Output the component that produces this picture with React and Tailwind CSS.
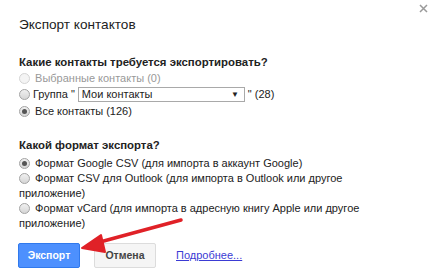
function Radio({ checked, disabled }) {
  return (
    <span
      className={`inline-block align-[-2px] w-[11px] h-[11px] rounded-full border mr-[2px] ${
        disabled
          ? "border-[#d4d4d4] bg-[#f4f4f4]"
          : "border-[#a3a3a3] bg-gradient-to-b from-[#f0f0f0] to-[#d6d6d6]"
      }`}
    >
      {checked && (
        <span className="block w-[5px] h-[5px] rounded-full bg-[#555] mt-[2px] ml-[2px]" />
      )}
    </span>
  );
}

function App() {
  return (
    <div
      className="relative w-[434px] h-[275px] bg-white text-[#222] overflow-hidden"
      style={{ fontFamily: '"Liberation Sans", Arial, sans-serif' }}
    >
      <button className="absolute right-[6px] top-[4px] w-[9px] h-[9px]">
        <svg width="9" height="9" viewBox="0 0 9 9" className="block">
          <path d="M1 1L8 8M8 1L1 8" stroke="#9a9a9a" strokeWidth="1.5" />
        </svg>
      </button>

      <div className="pl-[19px] pt-[17px]">
        <h2 className="text-[13.6px] leading-[16px] text-[#222]">Экспорт контактов</h2>

        <p className="mt-[22px] text-[11.4px] leading-[14px] font-bold">
          Какие контакты требуется экспортировать?
        </p>
        <div className="mt-[1px] text-[11px]">
          <div className="h-[16px] leading-[16px] text-[#999]">
            <Radio disabled /> Выбранные контакты (0)
          </div>
          <div className="h-[17px] flex items-center">
            <Radio />
            <span className="ml-[1px]">Группа "</span>
            <span className="ml-[3px] w-[167px] h-[15px] border border-[#a9a9a9] flex items-center justify-between pl-[3px] pr-[5px]">
              <span>Мои контакты</span>
              <span className="text-[8px] leading-none">▼</span>
            </span>
            <span className="ml-[3px]">" (28)</span>
          </div>
          <div className="h-[16px] leading-[16px]">
            <Radio checked /> Все контакты (126)
          </div>
        </div>

        <p className="mt-[19px] text-[11.4px] leading-[14px] font-bold">Какой формат экспорта?</p>
        <div className="mt-[4px] text-[11px] leading-[15px] w-[360px]">
          <div>
            <Radio checked /> Формат Google CSV (для импорта в аккаунт Google)
          </div>
          <div>
            <Radio /> Формат CSV для Outlook (для импорта в Outlook или другое приложение)
          </div>
          <div>
            <Radio /> Формат vCard (для импорта в адресную книгу Apple или другое приложение)
          </div>
        </div>

        <div className="mt-[12px] flex items-center">
          <button className="w-[62px] h-[25px] rounded-[2px] bg-[#4d90fe] border border-[#3079ed] text-white text-[10.5px] font-bold -ml-[1px]">
            Экспорт
          </button>
          <button className="ml-[14px] w-[62px] h-[25px] rounded-[2px] bg-[#f5f5f5] border border-[#dcdcdc] text-[#444] text-[10.5px] font-bold">
            Отмена
          </button>
          <a href="#" className="ml-[20px] text-[11px] text-[#3b3bd4] underline">
            Подробнее...
          </a>
        </div>
      </div>

      <svg className="absolute left-0 top-0 pointer-events-none" width="434" height="275">
        <path d="M181 220 L100 242" stroke="#e02127" strokeWidth="3.5" strokeLinecap="round" />
        <path d="M82 248 L101 235 L105 252 Z" fill="#e02127" stroke="#e02127" strokeWidth="2" strokeLinejoin="round" />
      </svg>
    </div>
  );
}

export default App;
